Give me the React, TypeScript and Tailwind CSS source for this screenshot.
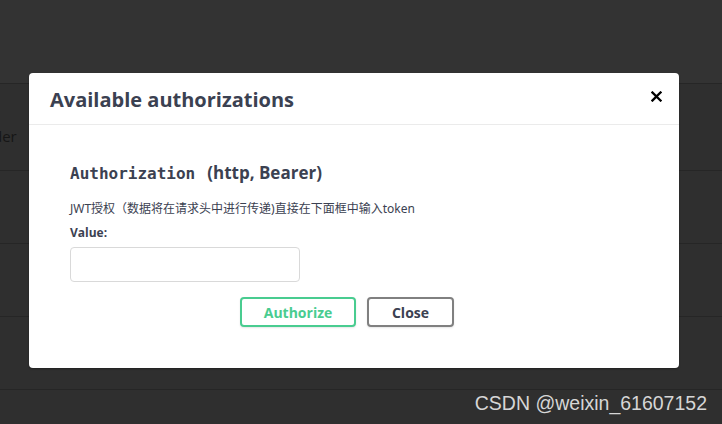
import React from "react";

export default function App() {
  return (
    <div className="relative w-[722px] h-[424px] overflow-hidden bg-[#2f2f2f]" style={{ fontFamily: '"Open Sans", "Noto Sans CJK SC", sans-serif' }}>
      {/* background page (dimmed) */}
      <div className="flex flex-col">
        <div className="h-[84px] bg-[#333333] border-b border-[#262626]" />
        <div className="h-[87px] border-b border-[#262626] flex items-center">
          <span className="text-[15px] text-[#161616] -ml-[7px] mt-[18px]">der</span>
        </div>
        <div className="h-[73px] border-b border-[#262626]" />
        <div className="h-[73px] border-b border-[#262626]" />
        <div className="h-[73px] border-b border-[#262626]" />
        <div className="flex-1" />
      </div>

      {/* modal */}
      <div className="absolute left-[29px] top-[73px] w-[650px] h-[295px] bg-white rounded-[4px] shadow-[0_1px_2px_rgba(0,0,0,0.3)] flex flex-col">
        <div className="h-[52px] border-b border-[#ebebeb] flex items-center justify-between pl-[21px] pr-[17px]">
          <h3 className="text-[20px] font-bold text-[#3b4151] leading-none mt-[2px]">Available authorizations</h3>
          <svg width="11" height="11" viewBox="0 0 11 11" className="mt-[-4px]">
            <path d="M1.5 1.5 L9.5 9.5 M9.5 1.5 L1.5 9.5" stroke="#000" strokeWidth="2.3" strokeLinecap="square" />
          </svg>
        </div>
        <div className="flex flex-col pl-[41px] pt-[37px]">
          <h4 className="text-[17px] font-bold text-[#3b4151] leading-[22px] flex items-baseline">
            <code style={{ fontFamily: '"DejaVu Sans Mono", monospace' }} className="text-[16px]">Authorization</code>
            <span className="ml-[12px]">(http, Bearer)</span>
          </h4>
          <p className="mt-[16px] text-[12px] leading-[16px] text-[#3b4151]" style={{ fontFamily: '"Noto Sans", "Noto Sans CJK SC", sans-serif' }}>
            JWT授权（数据将在请求头中进行传递)直接在下面框中输入token
          </p>
          <label className="mt-[8px] text-[12px] font-bold text-[#3b4151] leading-[16px]">Value:</label>
          <input className="mt-[6px] w-[230px] h-[35px] border border-[#d9d9d9] rounded-[4px] outline-none" />
        </div>
        <div className="flex gap-[11px] mt-[15px] pl-[211px]">
          <button className="w-[116px] h-[30px] border-2 border-[#49cc90] rounded-[4px] text-[14px] font-bold text-[#49cc90] bg-white shadow-[0_1px_2px_rgba(0,0,0,0.1)]">Authorize</button>
          <button className="w-[87px] h-[30px] border-2 border-[#808080] rounded-[4px] text-[14px] font-bold text-[#3b4151] bg-white shadow-[0_1px_2px_rgba(0,0,0,0.1)]">Close</button>
        </div>
      </div>

      {/* watermark */}
      <div className="absolute right-[15px] top-[391px] text-[19.5px] leading-[24px] text-[#d6d6d6]" style={{ fontFamily: '"Liberation Sans", Arial, sans-serif' }}>
        CSDN @weixin_61607152
      </div>
    </div>
  );
}
